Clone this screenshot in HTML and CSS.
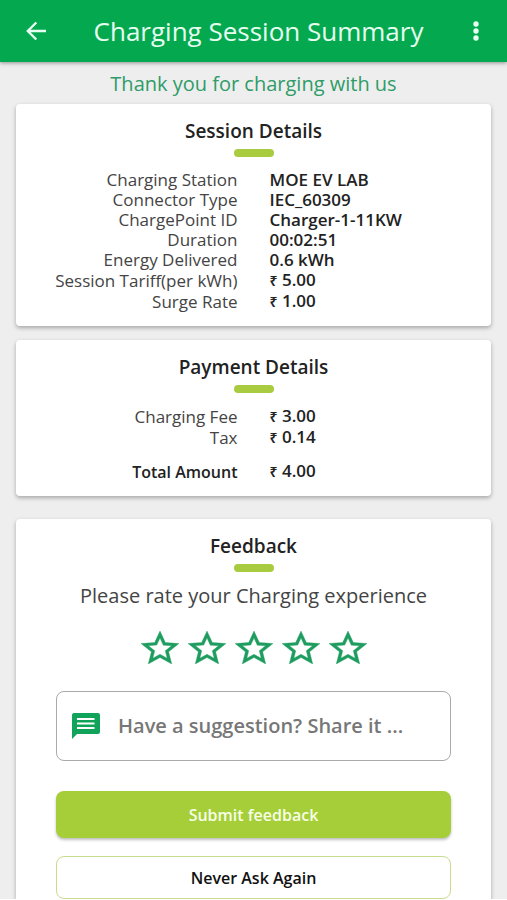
FILE: index.html
```html
<!DOCTYPE html>
<html lang="en">
<head>
  <meta charset="utf-8">
  <meta name="viewport" content="width=device-width, initial-scale=1">
  <title>Charging Session Summary</title>
  <link rel="stylesheet" href="styles.css">
</head>
<body>
  <svg class="defs" aria-hidden="true">
    <symbol id="star" viewBox="2 2 20 19" preserveAspectRatio="none">
      <path d="M22 9.24l-7.19-.62L12 2 9.19 8.63 2 9.24l5.46 4.73L5.82 21 12 17.27 18.18 21l-1.63-7.03L22 9.24zM12 15.4l-3.76 2.27 1-4.28-3.32-2.88 4.38-.38L12 6.1l1.71 4.04 4.38.38-3.32 2.88 1 4.28L12 15.4z"/>
    </symbol>
  </svg>

  <header class="bar">
    <button class="bar-button" type="button" aria-label="Back">
      <svg width="20" height="20" viewBox="0 0 20 20" fill="none" stroke="currentColor" stroke-width="2.400"><path d="M20 10H1.800M10.300 1.500L1.800 10l8.500 8.500"/></svg>
    </button>
    <h1 class="bar-title">Charging Session Summary</h1>
    <button class="bar-button" type="button" aria-label="More options">
      <svg width="6" height="20" viewBox="0 0 6 20" fill="currentColor"><circle cx="3" cy="3" r="2.700"/><circle cx="3" cy="10" r="2.700"/><circle cx="3" cy="17" r="2.700"/></svg>
    </button>
  </header>

  <main class="content">
    <p class="thanks">Thank you for charging with us</p>

    <section class="card">
      <h2 class="card-title">Session Details</h2>
      <table class="details">
        <tr><th scope="row">Charging Station</th><td>MOE EV LAB</td></tr>
        <tr><th scope="row">Connector Type</th><td>IEC_60309</td></tr>
        <tr><th scope="row">ChargePoint ID</th><td>Charger-1-11KW</td></tr>
        <tr><th scope="row">Duration</th><td>00:02:51</td></tr>
        <tr><th scope="row">Energy Delivered</th><td>0.6 kWh</td></tr>
        <tr><th scope="row">Session Tariff(per kWh)</th><td><span class="rupee">₹</span> 5.00</td></tr>
        <tr><th scope="row">Surge Rate</th><td><span class="rupee">₹</span> 1.00</td></tr>
      </table>
    </section>

    <section class="card">
      <h2 class="card-title">Payment Details</h2>
      <table class="details">
        <tr><th scope="row">Charging Fee</th><td><span class="rupee">₹</span> 3.00</td></tr>
        <tr><th scope="row">Tax</th><td><span class="rupee">₹</span> 0.14</td></tr>
        <tr class="total"><th scope="row">Total Amount</th><td><span class="rupee">₹</span> 4.00</td></tr>
      </table>
    </section>

    <form class="card feedback">
      <h2 class="card-title">Feedback</h2>
      <fieldset class="rating">
        <legend class="question">Please rate your Charging experience</legend>
        <div class="stars">
          <label class="star"><input type="radio" name="rating" value="1" aria-label="1 star"><svg><use href="#star"/></svg></label>
          <label class="star"><input type="radio" name="rating" value="2" aria-label="2 stars"><svg><use href="#star"/></svg></label>
          <label class="star"><input type="radio" name="rating" value="3" aria-label="3 stars"><svg><use href="#star"/></svg></label>
          <label class="star"><input type="radio" name="rating" value="4" aria-label="4 stars"><svg><use href="#star"/></svg></label>
          <label class="star"><input type="radio" name="rating" value="5" aria-label="5 stars"><svg><use href="#star"/></svg></label>
        </div>
      </fieldset>
      <label class="suggestion">
        <svg width="28" height="26" viewBox="0 0 28 26"><path fill="#12a35a" d="M2 0h24a2 2 0 0 1 2 2v17a2 2 0 0 1-2 2H5l-5 5V2a2 2 0 0 1 2-2z"/><path stroke="#fff" stroke-width="2.200" d="M5 6h17.500M5 10.500h17.500M5 15h17.500"/></svg>
        <input type="text" aria-label="Suggestion" placeholder="Have a suggestion? Share it ...">
      </label>
      <button class="action submit" type="button">Submit feedback</button>
      <button class="action never" type="button">Never Ask Again</button>
    </form>
  </main>
</body>
</html>
```
FILE: styles.css
```css
* {
  box-sizing: border-box;
}

body {
  margin: 0;
  background: #fff;
  color: #222;
  font: 16px/20px "Open Sans", "Noto Sans", sans-serif;
}

h1, h2, p, fieldset, legend {
  margin: 0;
  padding: 0;
  border: 0;
}

button, input {
  font: inherit;
}

.defs {
  position: absolute;
  width: 0;
  height: 0;
}

.bar {
  position: relative;
  display: flex;
  align-items: center;
  justify-content: space-between;
  height: 62px;
  padding: 0 16px;
  background: #04a84f;
  color: #e6fff0;
  box-shadow: 0 1px 4px rgba(0, 0, 0, 0.4);
}

.bar-button {
  display: flex;
  align-items: center;
  justify-content: center;
  width: 40px;
  height: 40px;
  padding: 0;
  border: 0;
  background: none;
  color: inherit;
}

.bar-button:last-child {
  width: 30px;
}

.bar-title {
  font-size: 26px;
  line-height: 36px;
  font-weight: 400;
}

.content {
  padding: 10px 16px 0;
  background: #eee;
}

.thanks {
  color: #2f9c68;
  font-size: 20px;
  line-height: 24px;
  text-align: center;
}

.card {
  margin: 8px 0 14px;
  padding: 14px 8px;
  border-radius: 4px;
  background: #fff;
  box-shadow: 0 2px 4px rgba(0, 0, 0, 0.3);
}

.card-title {
  font-size: 19px;
  line-height: 26px;
  font-weight: 600;
  text-align: center;
}

.card-title::after {
  content: "";
  display: block;
  width: 40px;
  height: 8px;
  margin: 5px auto 13px;
  border-radius: 4px;
  background: #a8cb3f;
}

.details {
  width: 100%;
  table-layout: fixed;
  border-collapse: collapse;
}

.details th,
.details td {
  padding: 0 16px;
  font-size: 17px;
  white-space: nowrap;
}

.details th {
  color: #444;
  font-weight: 400;
  text-align: right;
}

.details td {
  font-weight: 600;
}

.details .total th,
.details .total td {
  padding-top: 13px;
  color: #222;
  font-weight: 600;
}

.details .total th {
  font-size: 16px;
}

.rupee {
  font-size: 14px;
}

.feedback {
  margin: 23px 0 0;
  padding: 14px 40px 0;
  border-radius: 4px 4px 0 0;
}

.rating {
  min-width: 0;
}

.question {
  width: 100%;
  color: #444;
  font-size: 20px;
  line-height: 22px;
  text-align: center;
  white-space: nowrap;
}

.stars {
  display: flex;
  justify-content: center;
  gap: 9px;
  margin: 24px 0 27px;
}

.star {
  position: relative;
  display: flex;
}

.star input {
  position: absolute;
  inset: 0;
  margin: 0;
  opacity: 0;
}

.star svg {
  width: 38px;
  height: 33px;
  fill: #1f9d61;
  stroke: #1f9d61;
  stroke-width: 0.2px;
}

.suggestion {
  display: flex;
  align-items: center;
  gap: 18px;
  height: 70px;
  padding: 0 15px;
  border: 1px solid #aaa;
  border-radius: 8px;
}

.suggestion input {
  flex: 1;
  min-width: 0;
  height: 32px;
  padding: 0;
  border: 0;
  outline: 0;
  background: none;
  font-size: 20px;
  line-height: 32px;
  font-weight: 600;
}

.suggestion input::placeholder {
  color: #777;
  opacity: 1;
}

.action {
  display: block;
  width: 100%;
  border-radius: 8px;
  font-weight: 600;
}

.submit {
  height: 47px;
  margin: 30px 0 18px;
  border: 0;
  background: #a6ce39;
  color: #f7ffe6;
  box-shadow: 0 2px 3px rgba(0, 0, 0, 0.25);
}

.never {
  height: 43px;
  border: 1px solid #c9dc8c;
  background: #fff;
  color: #111;
}
```
